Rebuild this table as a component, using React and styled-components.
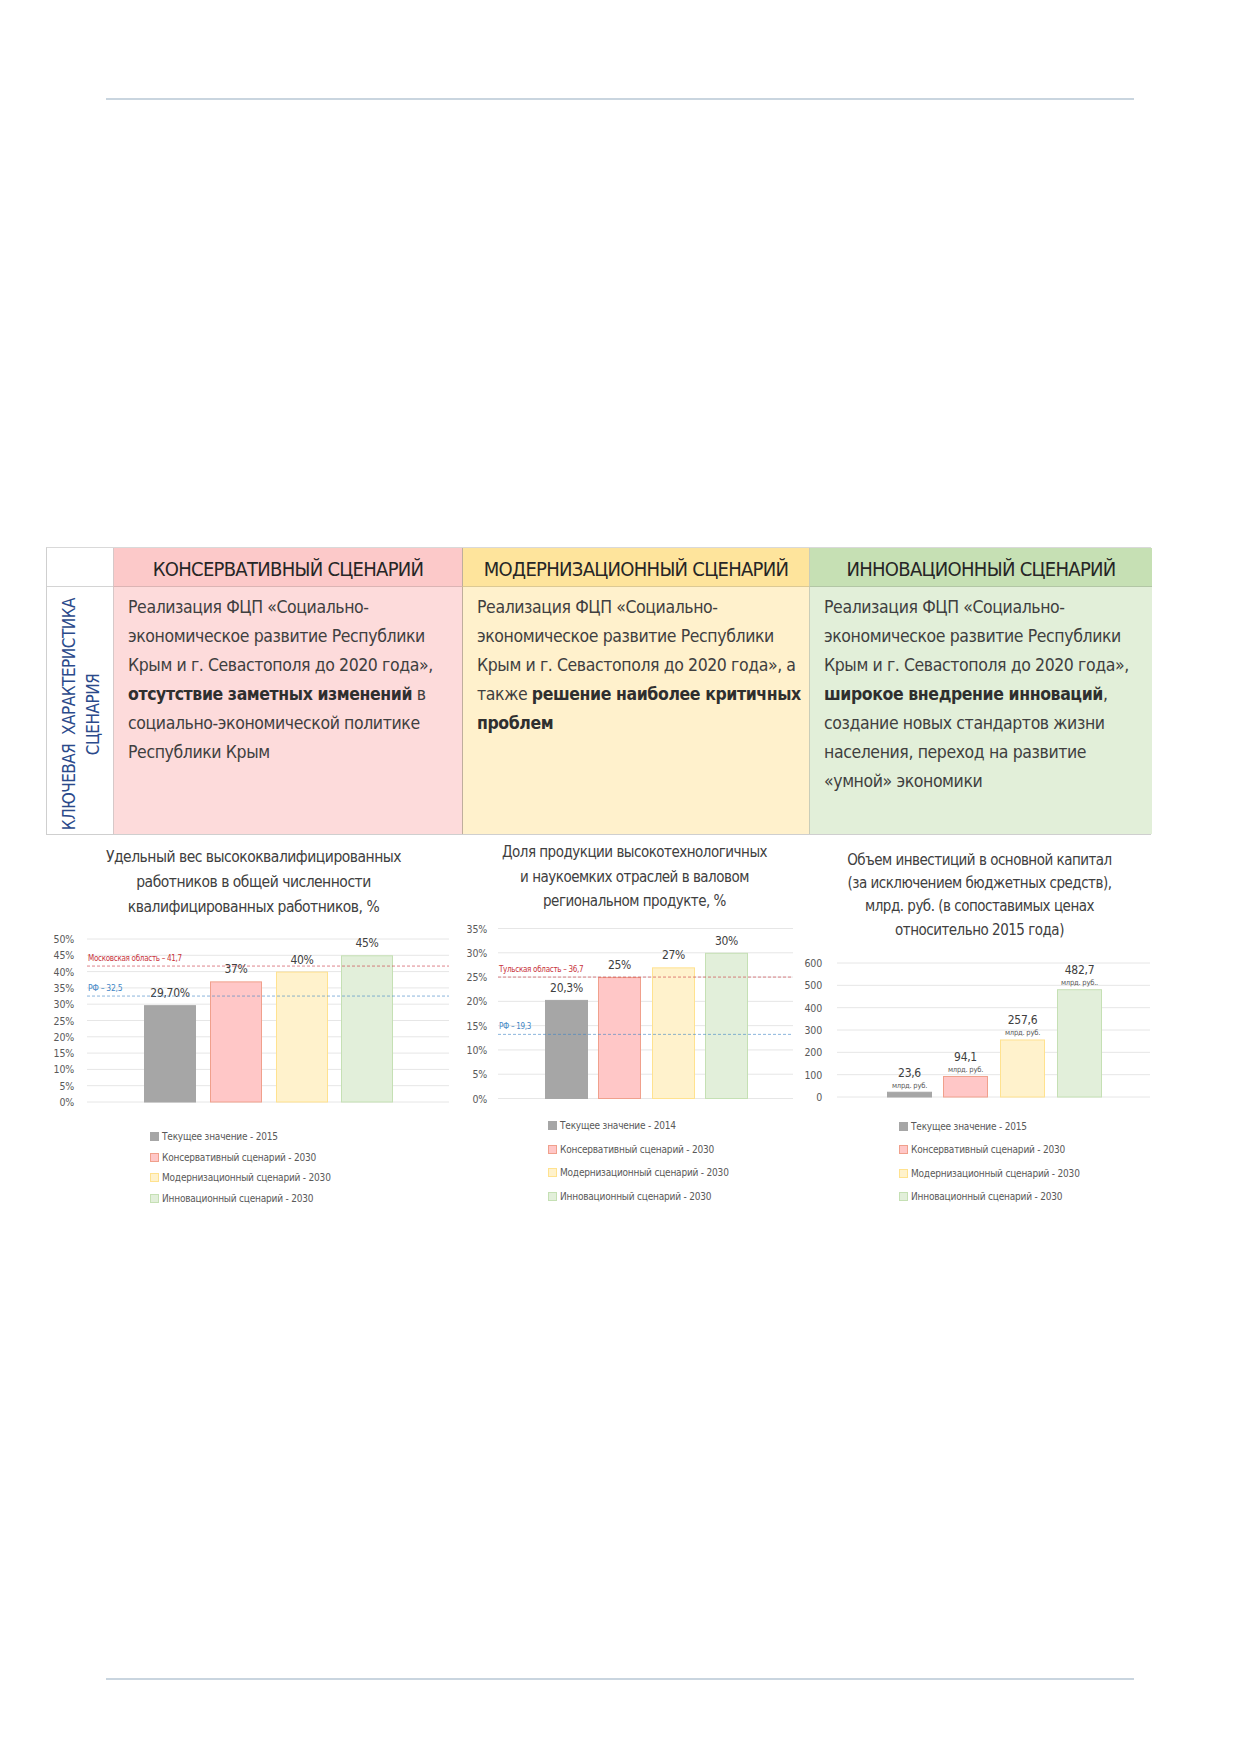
import React from 'react';
import styled, { createGlobalStyle } from 'styled-components';

const FONT = `"Liberation Sans Narrow", "DejaVu Sans Condensed", "Liberation Sans", sans-serif`;

const Global = createGlobalStyle`
  body {
    margin: 0;
    background: #ffffff;
    font-family: ${FONT};
    font-stretch: condensed;
  }
`;

const scenarios = [
  {
    key: 'cons',
    title: 'КОНСЕРВАТИВНЫЙ СЦЕНАРИЙ',
    head: '#fcc9c9',
    body: '#fddbdb',
    divider: '#d6c8c8',
    lines: [
      'Реализация ФЦП «Социально-',
      'экономическое развитие Республики',
      'Крым и г. Севастополя до 2020 года»,',
      [<b key="b">отсутствие заметных изменений</b>, ' в'],
      'социально-экономической политике',
      'Республики Крым',
    ],
  },
  {
    key: 'mod',
    title: 'МОДЕРНИЗАЦИОННЫЙ СЦЕНАРИЙ',
    head: '#fee49c',
    body: '#fff1cc',
    divider: '#bfae9c',
    lines: [
      'Реализация ФЦП «Социально-',
      'экономическое развитие Республики',
      'Крым и г. Севастополя до 2020 года», а',
      ['также ', <b key="b">решение наиболее критичных</b>],
      [<b key="b">проблем</b>],
    ],
  },
  {
    key: 'inn',
    title: 'ИННОВАЦИОННЫЙ СЦЕНАРИЙ',
    head: '#c6e0b4',
    body: '#e2efd9',
    divider: '#c9cdb9',
    lines: [
      'Реализация ФЦП «Социально-',
      'экономическое развитие Республики',
      'Крым и г. Севастополя до 2020 года»,',
      [<b key="b">широкое внедрение инноваций</b>, ','],
      'создание новых стандартов жизни',
      'населения, переход на развитие',
      '«умной» экономики',
    ],
  },
];

const legendItems = (year) => [
  { label: `Текущее значение - ${year}`, fill: '#a6a6a6', stroke: '#a6a6a6' },
  { label: 'Консервативный сценарий - 2030', fill: '#ffc7c7', stroke: '#f0a08c' },
  { label: 'Модернизационный сценарий - 2030', fill: '#fff2cc', stroke: '#ffe28f' },
  { label: 'Инновационный сценарий - 2030', fill: '#e2efda', stroke: '#c5e0b4' },
];

// svgTop = table bottom (835) + titleTop + title lines * titleLine
const charts = [
  {
    key: 'c1',
    left: 46,
    width: 415,
    title: ['Удельный вес высококвалифицированных', 'работников в общей численности', 'квалифицированных работников, %'],
    titleSize: 15.5,
    titleLine: 25,
    titleTop: 10,
    svgTop: 920,
    svgHeight: 190,
    yZero: 1102,
    yMax: 939,
    max: 50,
    step: 5,
    tick: (v) => `${v}%`,
    gridX: [87, 449],
    labelX: 74,
    barWidth: 52,
    bars: [
      { x: 144, value: 29.7, label: '29,70%' },
      { x: 210, value: 37, label: '37%' },
      { x: 276, value: 40, label: '40%' },
      { x: 341, value: 45, label: '45%' },
    ],
    refs: [
      { value: 41.7, color: '#c8343c', label: 'Московская область – 41,7', size: 8 },
      { value: 32.5, color: '#3f86c6', label: 'РФ – 32,5', size: 8.5 },
    ],
    legend: legendItems(2015),
    legendTop: 16,
    legendLine: 20.8,
    legendLeft: 104,
  },
  {
    key: 'c2',
    left: 461,
    width: 347,
    title: ['Доля продукции высокотехнологичных', 'и наукоемких отраслей в валовом', 'региональном продукте, %'],
    titleSize: 15,
    titleLine: 24.5,
    titleTop: 5,
    svgTop: 913.5,
    svgHeight: 191.5,
    yZero: 1098,
    yMax: 928,
    max: 35,
    step: 5,
    tick: (v) => `${v}%`,
    gridX: [498, 793],
    labelX: 487,
    barWidth: 43,
    bars: [
      { x: 545, value: 20.3, label: '20,3%' },
      { x: 598, value: 25, label: '25%' },
      { x: 652, value: 27, label: '27%' },
      { x: 705, value: 30, label: '30%' },
    ],
    refs: [
      { value: 25, color: '#c8343c', label: 'Тульская область – 36,7', size: 8 },
      { value: 13.2, color: '#3f86c6', label: 'РФ – 19,3', size: 8 },
    ],
    legend: legendItems(2014),
    legendTop: 9,
    legendLine: 23.6,
    legendLeft: 87,
  },
  {
    key: 'c3',
    left: 808,
    width: 343,
    title: ['Объем инвестиций в основной капитал', '(за исключением бюджетных средств),', 'млрд. руб. (в сопоставимых ценах', 'относительно 2015 года)'],
    titleSize: 15,
    titleLine: 23.3,
    titleTop: 13.8,
    svgTop: 942,
    svgHeight: 163,
    yZero: 1097,
    yMax: 963,
    max: 600,
    step: 100,
    tick: (v) => `${v}`,
    gridX: [837, 1150],
    labelX: 822,
    barWidth: 45,
    bars: [
      { x: 887, value: 23.6, label: '23,6', unit: 'млрд. руб.' },
      { x: 943, value: 94.1, label: '94,1', unit: 'млрд. руб.' },
      { x: 1000, value: 257.6, label: '257,6', unit: 'млрд. руб.' },
      { x: 1057, value: 482.7, label: '482,7', unit: 'млрд. руб..' },
    ],
    refs: [],
    legend: legendItems(2015),
    legendTop: 10,
    legendLine: 23.3,
    legendLeft: 91,
  },
];

const Page = styled.div`
  width: 1239px;
  height: 1752px;
  display: flex;
  flex-direction: column;
  box-sizing: border-box;
  padding: 98px 0 72px;
  color: #404040;
`;

const Rule = styled.div`
  margin-left: 106px;
  width: 1028px;
  height: 2px;
  background: #c9d5df;
  flex: none;
`;

const BottomRule = styled(Rule)`
  margin-top: auto;
`;

const Table = styled.div`
  margin: 447px 0 0 46px;
  width: 1105px;
  display: grid;
  grid-template-columns: 66px 349px 347px 343px;
  grid-template-rows: 39px 247px;
  box-sizing: border-box;
  border-top: 1px solid #d9d9d9;
  border-left: 1px solid #cfcfcf;
  border-bottom: 1px solid #cfcfcf;
`;

const Corner = styled.div`
  background: #ffffff;
  border-bottom: 1px solid #d4d4d4;
`;

const Head = styled.div`
  background: ${(p) => p.$bg};
  border-left: 1px solid ${(p) => p.$divider};
  border-bottom: 1px solid rgba(120, 120, 120, 0.25);
  display: flex;
  align-items: center;
  justify-content: center;
  padding-top: 3px;
  box-sizing: border-box;
  font-size: 20px;
  letter-spacing: -0.7px;
  color: #262626;
  white-space: nowrap;
`;

const SideCell = styled.div`
  background: #ffffff;
  display: flex;
  align-items: center;
  justify-content: center;
  padding: 8px 0 0 2px;
  box-sizing: border-box;
`;

const SideText = styled.div`
  writing-mode: vertical-rl;
  transform: rotate(180deg);
  text-align: center;
  color: #2b4a8b;
  font-size: 17px;
  letter-spacing: -0.5px;
  line-height: 24px;
  white-space: nowrap;
`;

const Body = styled.div`
  background: ${(p) => p.$bg};
  border-left: 1px solid ${(p) => p.$divider};
  padding: 6px 0 0 14px;
  box-sizing: border-box;
  font-size: 17.5px;
  letter-spacing: -0.4px;
  line-height: 29px;
  color: #3f3f3f;
  white-space: nowrap;

  b {
    color: #2f2f2f;
    font-weight: 700;
  }
`;

const Charts = styled.div`
  margin-left: 46px;
  display: grid;
  grid-template-columns: 415px 347px 343px;
  align-items: start;
`;

const ChartBox = styled.div`
  display: flex;
  flex-direction: column;
`;

const Title = styled.div`
  margin-top: ${(p) => p.$top}px;
  text-align: center;
  font-size: ${(p) => p.$size}px;
  letter-spacing: -0.5px;
  line-height: ${(p) => p.$line}px;
  color: #404040;
  white-space: nowrap;
`;

const Plot = styled.svg`
  display: block;
  overflow: visible;
`;

const Legend = styled.ul`
  list-style: none;
  margin: ${(p) => p.$top}px 0 0;
  padding: 0 0 0 ${(p) => p.$left}px;
`;

const LegendRow = styled.li`
  display: flex;
  align-items: center;
  gap: 3px;
  height: ${(p) => p.$line}px;
  font-size: 10px;
  letter-spacing: -0.2px;
  color: #595959;
  white-space: nowrap;
`;

const Swatch = styled.span`
  width: 7px;
  height: 7px;
  background: ${(p) => p.$fill};
  border: 1px solid ${(p) => p.$stroke};
  flex: none;
`;

function Chart({ c }) {
  const scale = (c.yZero - c.yMax) / c.max;
  const yOf = (v) => c.yZero - v * scale;
  const ticks = [];
  for (let v = 0; v <= c.max; v += c.step) ticks.push(v);

  return (
    <ChartBox>
      <Title $top={c.titleTop} $size={c.titleSize} $line={c.titleLine}>
        {c.title.map((t) => (
          <div key={t}>{t}</div>
        ))}
      </Title>
      <Plot
        width={c.width}
        height={c.svgHeight}
        viewBox={`${c.left} ${c.svgTop} ${c.width} ${c.svgHeight}`}
        fontFamily={FONT}
      >
        {ticks.map((v) => (
          <g key={v}>
            <line x1={c.gridX[0]} x2={c.gridX[1]} y1={yOf(v)} y2={yOf(v)} stroke="#e6e6e6" strokeWidth="1" />
            <text x={c.labelX} y={yOf(v) + 4} textAnchor="end" fontSize="10.5" letterSpacing="-0.2" fill="#595959">
              {c.tick(v)}
            </text>
          </g>
        ))}
        {c.bars.map((b, i) => {
          const item = c.legend[i];
          const top = yOf(b.value);
          return (
            <g key={b.label}>
              <rect
                x={b.x + 0.5}
                y={top + 0.5}
                width={c.barWidth - 1}
                height={c.yZero - top - 0.5}
                fill={item.fill}
                stroke={item.stroke}
                strokeWidth="1"
              />
              {b.unit ? (
                <>
                  <text x={b.x + c.barWidth / 2} y={top - 15} textAnchor="middle" fontSize="12" letterSpacing="-0.3" fill="#404040">
                    {b.label}
                  </text>
                  <text x={b.x + c.barWidth / 2} y={top - 4} textAnchor="middle" fontSize="7.5" letterSpacing="-0.2" fill="#595959">
                    {b.unit}
                  </text>
                </>
              ) : (
                <text x={b.x + c.barWidth / 2} y={top - 8} textAnchor="middle" fontSize="12" letterSpacing="-0.3" fill="#404040">
                  {b.label}
                </text>
              )}
            </g>
          );
        })}
        {c.refs.map((r) => (
          <g key={r.label}>
            <line
              x1={c.gridX[0]}
              x2={c.gridX[1]}
              y1={yOf(r.value)}
              y2={yOf(r.value)}
              stroke={r.color}
              strokeWidth="0.7"
              strokeDasharray="3 2"
              opacity="0.85"
            />
            <text x={c.gridX[0] + 1} y={yOf(r.value) - 5} fontSize={r.size} letterSpacing="-0.3" fill={r.color}>
              {r.label}
            </text>
          </g>
        ))}
      </Plot>
      <Legend $top={c.legendTop} $left={c.legendLeft}>
        {c.legend.map((l) => (
          <LegendRow key={l.label} $line={c.legendLine}>
            <Swatch $fill={l.fill} $stroke={l.stroke} />
            {l.label}
          </LegendRow>
        ))}
      </Legend>
    </ChartBox>
  );
}

export default function App() {
  return (
    <>
      <Global />
      <Page>
        <Rule />
        <Table>
          <Corner />
          {scenarios.map((s) => (
            <Head key={s.key} $bg={s.head} $divider={s.divider}>
              {s.title}
            </Head>
          ))}
          <SideCell>
            <SideText>
              КЛЮЧЕВАЯ&nbsp; ХАРАКТЕРИСТИКА
              <br />
              СЦЕНАРИЯ
            </SideText>
          </SideCell>
          {scenarios.map((s) => (
            <Body key={s.key} $bg={s.body} $divider={s.divider}>
              {s.lines.map((line, i) => (
                <div key={i}>{line}</div>
              ))}
            </Body>
          ))}
        </Table>
        <Charts>
          {charts.map((c) => (
            <Chart key={c.key} c={c} />
          ))}
        </Charts>
        <BottomRule />
      </Page>
    </>
  );
}
